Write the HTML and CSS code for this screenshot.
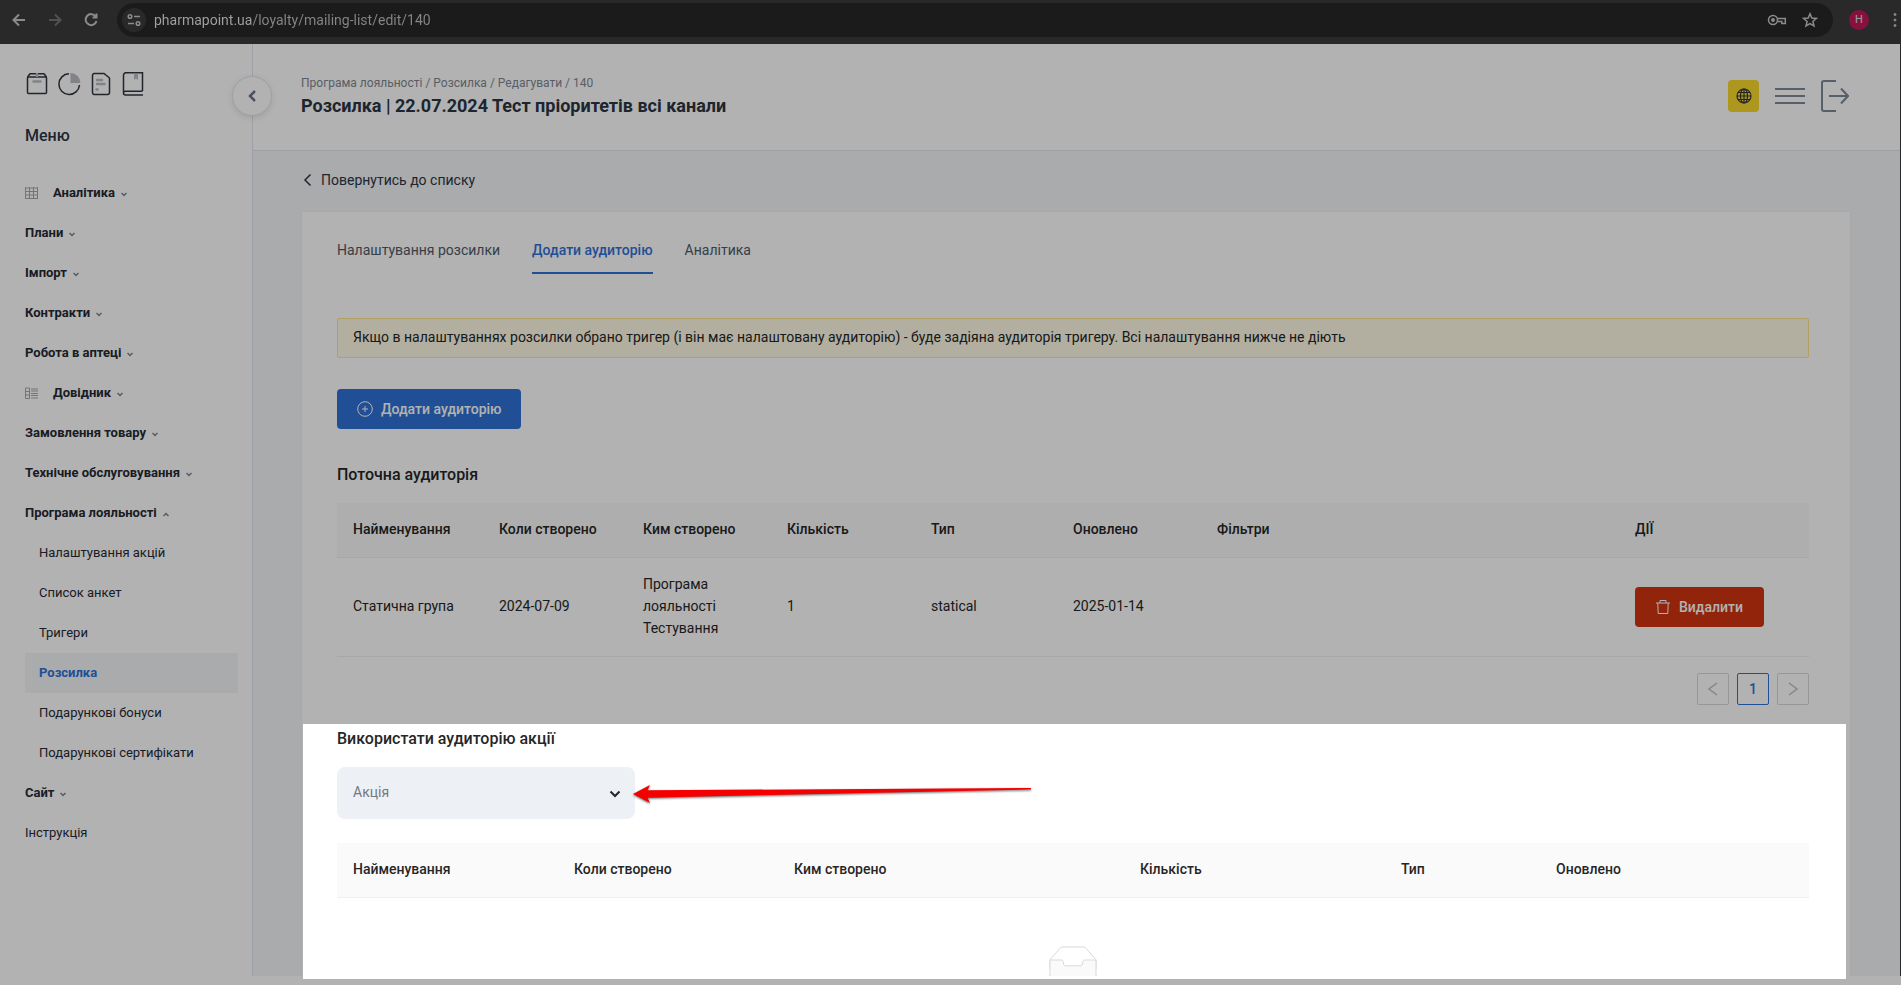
FILE: index.html
```html
<!DOCTYPE html>
<html lang="uk">
<head>
  <meta charset="UTF-8">
  <meta name="viewport" content="width=device-width, initial-scale=1.0">
  <title>Розсилка</title>
  <link rel="stylesheet" href="styles.css">
</head>
<body>

  <!-- Browser bar -->
  <div class="browser">
    <button class="browser-btn" aria-label="Back">
      <svg width="16" height="16" viewBox="0 0 16 16"><path d="M14 8H3M8 2.500L2.500 8L8 13.500"/></svg>
    </button>
    <button class="browser-btn off" aria-label="Forward">
      <svg width="16" height="16" viewBox="0 0 16 16"><path d="M2 8h11M8 2.500L13.500 8L8 13.500"/></svg>
    </button>
    <button class="browser-btn" aria-label="Reload">
      <svg width="16" height="16" viewBox="0 0 16 16"><path d="M12.700 4.500A5.500 5.500 0 1 0 13.500 9M13.500 1.500V5.500H9.500"/></svg>
    </button>
    <div class="address">
      <button class="site-info" aria-label="Site information">
        <svg width="14" height="14" viewBox="0 0 14 14"><circle cx="3" cy="3.500" r="1.800"/><path d="M7 3.500h6M1 10.500h6"/><circle cx="11" cy="10.500" r="1.800"/></svg>
      </button>
      <input class="address-input" type="text" aria-label="Address" value="pharmapoint.ua/loyalty/mailing-list/edit/140">
      <button class="browser-btn" aria-label="Passwords">
        <svg width="20" height="16" viewBox="0 0 20 16"><circle cx="6" cy="8" r="4.500"/><circle cx="6" cy="8" r="1.200" fill="#c7c7c7"/><path d="M10.300 6.500H18.300V11.500H14.800V9.500H10.300"/></svg>
      </button>
      <button class="browser-btn" aria-label="Bookmark">
        <svg width="16" height="16" viewBox="0 0 16 16"><path d="M8 1.800L9.800 6.100L14.400 6.400L10.900 9.400L12 13.900L8 11.500L4 13.900L5.100 9.400L1.600 6.400L6.200 6.100Z"/></svg>
      </button>
    </div>
    <button class="avatar">H</button>
    <button class="browser-btn dots" aria-label="Menu">
      <svg width="4" height="16" viewBox="0 0 4 16"><circle cx="2" cy="2.500" r="1"/><circle cx="2" cy="8" r="1"/><circle cx="2" cy="13.500" r="1"/></svg>
    </button>
  </div>

  <div class="app">
    <!-- Sidebar -->
    <aside class="sidebar">
      <div class="shortcuts">
        <a href="#" aria-label="Товари"><svg width="24" height="24" viewBox="0 0 24 24"><rect x="2.500" y="5" width="19" height="16.500" rx="1"/><path d="M2.500 5L5 1.700H19L21.500 5"/><path class="soft" d="M8.500 9.500H15.500M12 2V4"/></svg></a>
        <a href="#" aria-label="Звіти"><svg width="24" height="24" viewBox="0 0 24 24"><path d="M12 1.800A10.300 10.300 0 1 0 22.500 13"/><path class="soft-fill" d="M13.500 11V1A10 10 0 0 1 23.500 11Z"/></svg></a>
        <a href="#" aria-label="Документи"><svg width="24" height="24" viewBox="0 0 24 24"><path d="M5 1.500H15L20.500 6V20.500A2 2 0 0 1 18.500 22.500H5A2 2 0 0 1 3.500 20.500V3.500A2 2 0 0 1 5 1.500Z"/><path class="soft" d="M8 8H13M8 12H15.500M7.500 17.500H8.500"/></svg></a>
        <a href="#" aria-label="Книга"><svg width="24" height="24" viewBox="0 0 24 24"><path d="M21.500 19V.700H5A2.500 2.500 0 0 0 2.500 3V21A2 2 0 0 0 4.500 23H22M2.500 21A2 2 0 0 1 4.500 19.300H21.500"/><path class="soft-fill" d="M13 1.500H17V8L15 6.500L13 8Z"/></svg></a>
      </div>
      <h2 class="menu-title">Меню</h2>
      <nav class="menu">
        <button class="menu-item">
          <svg class="menu-icon" width="13" height="12" viewBox="0 0 13 12"><path d="M.500 0V12M4.500 0V12M8.500 0V12M12.500 0V12M0 1H13M0 4.500H13M0 8H13M0 11.500H13"/></svg>
          Аналітика <svg class="caret" width="6" height="5" viewBox="0 0 6 5"><path d="M.500 1L3 3.500L5.500 1"/></svg>
        </button>
        <button class="menu-item">Плани <svg class="caret" width="6" height="5" viewBox="0 0 6 5"><path d="M.500 1L3 3.500L5.500 1"/></svg></button>
        <button class="menu-item">Імпорт <svg class="caret" width="6" height="5" viewBox="0 0 6 5"><path d="M.500 1L3 3.500L5.500 1"/></svg></button>
        <button class="menu-item">Контракти <svg class="caret" width="6" height="5" viewBox="0 0 6 5"><path d="M.500 1L3 3.500L5.500 1"/></svg></button>
        <button class="menu-item">Робота в аптеці <svg class="caret" width="6" height="5" viewBox="0 0 6 5"><path d="M.500 1L3 3.500L5.500 1"/></svg></button>
        <button class="menu-item">
          <svg class="menu-icon" width="13" height="12" viewBox="0 0 13 12"><path d="M.500 1V11.500H4.500V1ZM0 4.500H4.500M0 8H4.500M6 2H13M6 4H13M6 6.500H13M6 8.500H13M6 11H13"/></svg>
          Довідник <svg class="caret" width="6" height="5" viewBox="0 0 6 5"><path d="M.500 1L3 3.500L5.500 1"/></svg>
        </button>
        <button class="menu-item">Замовлення товару <svg class="caret" width="6" height="5" viewBox="0 0 6 5"><path d="M.500 1L3 3.500L5.500 1"/></svg></button>
        <button class="menu-item">Технічне обслуговування <svg class="caret" width="6" height="5" viewBox="0 0 6 5"><path d="M.500 1L3 3.500L5.500 1"/></svg></button>
        <button class="menu-item">Програма лояльності <svg class="caret" width="6" height="5" viewBox="0 0 6 5"><path d="M.500 4L3 1.500L5.500 4"/></svg></button>
        <a class="menu-item sub" href="#">Налаштування акцій</a>
        <a class="menu-item sub" href="#">Список анкет</a>
        <a class="menu-item sub" href="#">Тригери</a>
        <a class="menu-item sub active" href="#">Розсилка</a>
        <a class="menu-item sub" href="#">Подарункові бонуси</a>
        <a class="menu-item sub" href="#">Подарункові сертифікати</a>
        <button class="menu-item">Сайт <svg class="caret" width="6" height="5" viewBox="0 0 6 5"><path d="M.500 1L3 3.500L5.500 1"/></svg></button>
        <a class="menu-item plain" href="#">Інструкція</a>
      </nav>
      <button class="collapse" aria-label="Згорнути меню">
        <svg width="10" height="12" viewBox="0 0 10 12"><path d="M8 1L3 6L8 11"/></svg>
      </button>
    </aside>

    <main class="main">
      <header class="header">
        <div>
          <div class="breadcrumb">Програма лояльності / Розсилка / Редагувати / 140</div>
          <h1 class="page-title">Розсилка | 22.07.2024 Тест пріоритетів всі канали</h1>
        </div>
        <div class="header-actions">
          <button class="lang" aria-label="Мова">
            <svg width="16" height="16" viewBox="0 0 16 16"><circle cx="8" cy="8" r="7"/><ellipse cx="8" cy="8" rx="3.500" ry="7"/><path d="M8 1V15M1 8H15M2 4.500H14M2 11.500H14"/></svg>
          </button>
          <button class="icon-btn" aria-label="Меню">
            <svg width="30" height="32" viewBox="0 0 30 32"><path d="M0 9H30M0 16H30M0 23H30"/></svg>
          </button>
          <button class="icon-btn" aria-label="Вийти">
            <svg width="28" height="32" viewBox="0 0 28 32"><path d="M15 1H3A2 2 0 0 0 1 3V29A2 2 0 0 0 3 31H15M8 16H27M20 8.500L27 16L20 23.500"/></svg>
          </button>
        </div>
      </header>

      <div class="content">
        <a class="back" href="#">
          <svg width="12" height="14" viewBox="0 0 12 14"><path d="M9.500 1.500L4 7L9.500 12.500"/></svg>
          Повернутись до списку
        </a>

        <div class="card">
          <nav class="tabs">
            <a class="tab" href="#">Налаштування розсилки</a>
            <a class="tab active" href="#">Додати аудиторію</a>
            <a class="tab" href="#">Аналітика</a>
          </nav>

          <div class="alert">Якщо в налаштуваннях розсилки обрано тригер (і він має налаштовану аудиторію) - буде задіяна аудиторія тригеру. Всі налаштування нижче не діють</div>

          <button class="btn btn-primary">
            <svg width="16" height="16" viewBox="0 0 16 16"><circle cx="8" cy="8" r="7.300"/><path d="M8 5V11M5 8H11"/></svg>
            Додати аудиторію
          </button>

          <!-- Current audience -->
          <h3 class="section-title">Поточна аудиторія</h3>
          <table class="table current">
            <colgroup><col class="c1"><col class="c2"><col class="c3"><col class="c4"><col class="c5"><col class="c6"><col><col class="c8"></colgroup>
            <thead>
              <tr>
                <th>Найменування</th>
                <th>Коли створено</th>
                <th>Ким створено</th>
                <th>Кількість</th>
                <th>Тип</th>
                <th>Оновлено</th>
                <th>Фільтри</th>
                <th>ДІЇ</th>
              </tr>
            </thead>
            <tbody>
              <tr>
                <td>Статична група</td>
                <td>2024-07-09</td>
                <td>Програма лояльності Тестування</td>
                <td>1</td>
                <td>statical</td>
                <td>2025-01-14</td>
                <td></td>
                <td>
                  <button class="btn btn-danger">
                    <svg width="14" height="16" viewBox="0 0 14 16"><path d="M0 4H14M4 4V1.500H10V4M1.800 4L2.200 14.500H11.800L12.200 4"/></svg>
                    Видалити
                  </button>
                </td>
              </tr>
            </tbody>
          </table>
          <div class="pagination">
            <button disabled aria-label="Назад"><svg width="12" height="14" viewBox="0 0 12 14"><path d="M10 1L2 7L10 13"/></svg></button>
            <button class="active">1</button>
            <button disabled aria-label="Вперед"><svg width="12" height="14" viewBox="0 0 12 14"><path d="M2 1L10 7L2 13"/></svg></button>
          </div>

          <!-- Audience of a promo action -->
          <h3 class="section-title promo-title"><label for="action">Використати аудиторію акції</label></h3>
          <div class="select-wrap">
            <select id="action" class="select">
              <option>Акція</option>
            </select>
            <svg class="select-arrow" width="12" height="8" viewBox="0 0 12 8"><path d="M1.500 1.500L6 6L10.500 1.500"/></svg>
            <svg class="pointer" width="400" height="24" viewBox="0 0 400 24"><path d="M0 12L17 3L14.500 8.300L398 6V7.500L14.500 15.700L17 21Z"/></svg>
          </div>

          <table class="table promo">
            <colgroup><col class="p1"><col class="p2"><col class="p3"><col class="p4"><col class="p5"><col></colgroup>
            <thead>
              <tr>
                <th>Найменування</th>
                <th>Коли створено</th>
                <th>Ким створено</th>
                <th>Кількість</th>
                <th>Тип</th>
                <th>Оновлено</th>
              </tr>
            </thead>
            <tbody>
              <tr>
                <td class="empty" colspan="6">
                  <svg width="64" height="41" viewBox="0 0 64 41"><g transform="translate(0 1)" fill="none"><ellipse fill="#f5f5f5" stroke="none" cx="32" cy="33" rx="32" ry="7"/><g stroke="#d9d9d9"><path d="M55 12.760L44.854 1.258C44.367.474 43.656 0 42.907 0H21.093c-.749 0-1.460.474-1.947 1.257L9 12.761V22h46v-9.240z"/><path d="M41.613 15.931c0-1.605.994-2.930 2.227-2.931H55v18.137C55 33.260 53.680 35 52.050 35h-40.100C10.320 35 9 33.259 9 31.137V13h11.160c1.233 0 2.227 1.323 2.227 2.928v.022c0 1.605 1.005 2.901 2.237 2.901h14.752c1.232 0 2.237-1.308 2.237-2.913v-.007z" fill="#fafafa"/></g></g></svg>
                </td>
              </tr>
            </tbody>
          </table>
        </div>
      </div>
    </main>
  </div>

  <!-- Dims everything except the highlighted area -->
  <div class="spotlight"></div>

</body>
</html>
```

FILE: styles.css
```css
* {
  box-sizing: border-box;
}

body {
  margin: 0;
  height: 100vh;
  padding-bottom: 9px;
  display: flex;
  flex-direction: column;
  position: relative;
  overflow: hidden;
  background: #fff;
  font-family: Roboto, "Liberation Sans", sans-serif;
  font-size: 14px;
  line-height: 22px;
  color: #262626;
}

button, input, select {
  font: inherit;
  color: inherit;
  border: none;
  background: none;
  padding: 0;
  outline: none;
}

button {
  cursor: pointer;
}

a {
  color: inherit;
  text-decoration: none;
}

svg {
  fill: none;
  stroke: currentColor;
  flex-shrink: 0;
}

/* Browser bar */
.browser {
  height: 44px;
  flex-shrink: 0;
  display: flex;
  align-items: flex-start;
  padding: 3px 4px 0 11px;
  background: #3c3c3c;
  color: #c7c7c7;
}

.browser-btn {
  height: 34px;
  display: flex;
  align-items: center;
  margin-right: 20px;
}

.browser-btn svg {
  stroke-width: 2;
}

.browser-btn.off {
  color: #757575;
}

.address {
  flex: 1;
  height: 34px;
  display: flex;
  align-items: center;
  margin-left: -2px;
  padding-left: 5px;
  border-radius: 17px;
  background: #282828;
}

.address .browser-btn {
  margin-right: 15px;
}

.address .browser-btn svg {
  stroke-width: 1.5;
}

.site-info {
  width: 24px;
  height: 24px;
  display: flex;
  align-items: center;
  justify-content: center;
  margin-right: 8px;
  border-radius: 50%;
  background: #3c3c3c;
}

.site-info svg {
  stroke-width: 1.5;
}

/* The host is brighter than the path */
.address-input {
  flex: 1;
  color: transparent;
  background: linear-gradient(90deg, #e8e8e8 98px, #c0c0c0 98px);
  -webkit-background-clip: text;
  background-clip: text;
}

.avatar {
  width: 20px;
  height: 20px;
  margin: 7px 24px 0 16px;
  border-radius: 50%;
  background: #c2185b;
  color: #e0e0e0;
  font-size: 11px;
  line-height: 20px;
}

.browser-btn.dots {
  margin-right: 0;
}

.dots svg {
  fill: currentColor;
  stroke-width: 1;
}

/* App layout */
.app {
  flex: 1;
  min-height: 0;
  display: flex;
  overflow: hidden;
  border-right: 1px solid #3c3c3c;
}

.sidebar {
  position: relative;
  width: 253px;
  flex-shrink: 0;
  padding: 28px 14px 0 25px;
  border-right: 1px solid #e1e5eb;
}

.shortcuts {
  display: flex;
  gap: 8px;
  color: #303740;
}

.shortcuts a {
  display: flex;
}

.shortcuts svg {
  stroke-width: 1.5;
}

.shortcuts .soft {
  stroke: #b9bcc0;
  stroke-width: 2.5;
  stroke-linecap: round;
}

.shortcuts .soft-fill {
  fill: #b9bcc0;
  stroke: none;
}

.menu-title {
  margin: 28px 0 25px;
  font-size: 16px;
  font-weight: 500;
  line-height: 24px;
  color: #2c3542;
}

.menu {
  display: flex;
  flex-direction: column;
}

.menu-item {
  height: 40px;
  display: flex;
  align-items: center;
  font-size: 13px;
  font-weight: 700;
  color: #262a33;
}

.menu-item.sub {
  padding-left: 14px;
}

.menu-item.sub, .menu-item.plain {
  font-weight: 400;
}

.menu-item.active {
  background: #f3f5f8;
  color: #2f72d6;
  font-weight: 700;
}

.menu-icon {
  margin-right: 15px;
  color: #a3a8b0;
}

.caret {
  margin: 3px 0 0 6px;
  color: #7b828e;
  stroke-width: 1.5;
}

.collapse {
  position: absolute;
  top: 32px;
  right: -20px;
  width: 40px;
  height: 40px;
  display: flex;
  align-items: center;
  justify-content: center;
  border: 1px solid #e1e5eb;
  border-radius: 50%;
  background: #fff;
  box-shadow: 0 2px 6px rgba(0, 0, 0, 0.1);
  color: #6b7685;
}

.collapse svg {
  stroke-width: 2.5;
}

.main {
  flex: 1;
  min-width: 0;
  background: #f3f5f8;
}

.header {
  height: 107px;
  display: flex;
  justify-content: space-between;
  align-items: flex-start;
  padding: 29px 51px 0 48px;
  background: #fff;
  border-bottom: 1px solid #e1e5eb;
}

.breadcrumb {
  font-size: 12px;
  line-height: 20px;
  color: #7f8792;
}

.page-title {
  margin: 1px 0 0;
  font-size: 18px;
  font-weight: 700;
  line-height: 24px;
  color: #2c3542;
}

.header-actions {
  display: flex;
  align-items: center;
  gap: 16px;
  margin-top: 7px;
  color: #7b8899;
}

.header-actions svg {
  display: block;
  stroke-width: 2;
}

.lang {
  width: 31px;
  height: 32px;
  display: flex;
  align-items: center;
  justify-content: center;
  border-radius: 4px;
  background: #f9d82c;
  color: #33363b;
}

.header-actions .lang svg {
  stroke-width: 1.2;
}

.content {
  padding: 18px 49px 0 48px;
}

.back {
  display: inline-flex;
  align-items: center;
  gap: 8px;
  margin-bottom: 20px;
  color: #2c3542;
}

.back svg {
  stroke-width: 1.5;
}

.card {
  padding: 27px 41px 32px 35px;
  background: #fff;
  border: 1px solid #eff1f4;
}

/* Tabs */
.tabs {
  display: flex;
  gap: 32px;
  margin-bottom: 44px;
}

.tab {
  padding-bottom: 11px;
  border-bottom: 2px solid transparent;
  color: #505a66;
}

.tab.active {
  border-color: #2f72d6;
  color: #2f72d6;
  font-weight: 500;
}

.alert {
  height: 40px;
  margin-bottom: 31px;
  padding: 7px 15px;
  background: #fffbe6;
  border: 1px solid #ffe58f;
  border-radius: 2px;
}

.btn {
  height: 40px;
  display: flex;
  align-items: center;
  gap: 8px;
  padding: 0 20px;
  border-radius: 4px;
  color: #fff;
  font-weight: 500;
}

.btn-primary {
  background: #2f72d6;
}

.btn-danger {
  gap: 9px;
  padding: 0 21px;
  background: #d13411;
}

.section-title {
  margin: 34px 0 16px;
  font-size: 16px;
  font-weight: 500;
  line-height: 24px;
}

.promo-title {
  margin-top: 22px;
}

/* Tables */
.table {
  width: 100%;
  table-layout: fixed;
  border-collapse: separate;
  border-spacing: 0;
}

.table th, .table td {
  padding: 15px 16px 17px;
  border-bottom: 1px solid #f0f0f0;
  text-align: left;
}

.table td:last-child {
  padding: 16px;
}

.table th {
  background: #fafafa;
  font-weight: 500;
}

.c1 { width: 146px; }
.c2, .c3, .c4, .c6 { width: 144px; }
.c5 { width: 142px; }
.c8 { width: 190px; }

.p1 { width: 221px; }
.p2 { width: 220px; }
.p3 { width: 346px; }
.p4 { width: 261px; }
.p5 { width: 155px; }

.table td.empty {
  padding: 48px 16px;
  text-align: center;
}

.pagination {
  display: flex;
  justify-content: flex-end;
  gap: 8px;
  margin-top: 16px;
}

.pagination button {
  width: 32px;
  height: 32px;
  display: flex;
  align-items: center;
  justify-content: center;
  border: 1px solid #d9d9d9;
  border-radius: 2px;
  color: #bfbfbf;
}

.pagination svg {
  stroke-width: 1.5;
}

.pagination .active {
  border-color: #2f72d6;
  color: #2f72d6;
  font-weight: 500;
}

/* Select */
.select-wrap {
  position: relative;
  width: 298px;
  margin-bottom: 24px;
}

.select {
  width: 100%;
  height: 52px;
  display: block;
  padding: 0 16px 2px;
  appearance: none;
  border-radius: 8px;
  background: #edf0f5;
  color: #747983;
}

.select-arrow {
  position: absolute;
  top: 23px;
  right: 14px;
  stroke-width: 2;
}

.pointer {
  position: absolute;
  top: 15px;
  left: 296px;
  fill: #f50000;
  stroke: none;
  filter: drop-shadow(0 1px 1px rgba(0, 0, 0, 0.6));
}

.spotlight {
  position: absolute;
  top: 724px;
  right: 55px;
  bottom: 6px;
  left: 303px;
  box-shadow: 0 0 0 2000px rgba(0, 0, 0, 0.3);
  pointer-events: none;
}
```
